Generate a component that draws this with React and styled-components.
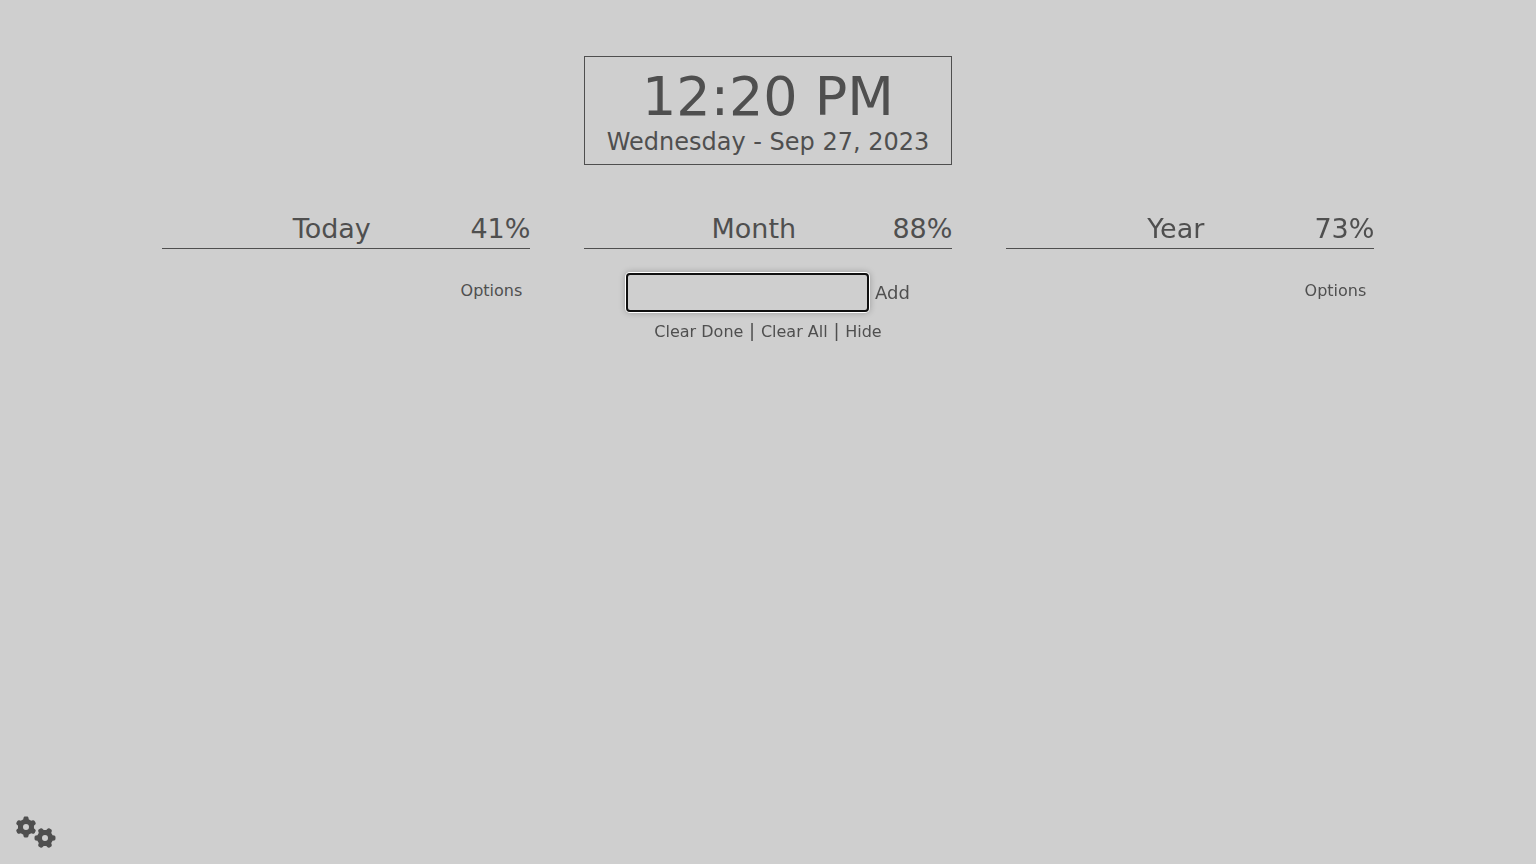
import React from "react";
import styled, { createGlobalStyle } from "styled-components";
import { FaGears } from "react-icons/fa6";

const GlobalStyle = createGlobalStyle`
  html { height: 100%; background: #cfcfcf; }
  body { margin: 0; height: 100%; overflow: hidden; }
  #root { height: 100%; }
  * { box-sizing: border-box; }
`;

const Page = styled.div`
  height: 100%;
  display: flex;
  flex-direction: column;
  align-items: center;
  padding-top: 56px;
  background: #cfcfcf;
  color: #4f4f4f;
  font-family: "DejaVu Sans", sans-serif;
`;

const Clock = styled.header`
  width: 368px;
  height: 109px;
  border: 1px solid #4f4f4f;
  text-align: center;
  padding-top: 9px;
`;

const Time = styled.div`
  font-size: 54px;
  line-height: 62px;
  white-space: nowrap;
`;

const DateLine = styled.div`
  font-size: 24px;
  line-height: 28px;
  white-space: nowrap;
`;

const Columns = styled.main`
  display: grid;
  grid-template-columns: repeat(3, 368px);
  column-gap: 54px;
  margin-top: 47px;
`;

const Column = styled.section`
  display: flex;
  flex-direction: column;
`;

const Heading = styled.div`
  display: flex;
  height: 37px;
  border-bottom: 1px solid #4f4f4f;
  font-size: 27px;
  line-height: 33px;
`;

const Title = styled.div`
  flex: 1;
  text-align: center;
  padding-left: 31.2px;
`;

const Percent = styled.div`
  margin-right: -0.4px;
  text-align: right;
`;

const Options = styled.div`
  align-self: flex-end;
  margin: 32px 7.7px 0 0;
  font-size: 16px;
  line-height: 20px;
`;

const Form = styled.form`
  display: flex;
  align-items: center;
  margin: 24px 0 0 42px;
`;

const Field = styled.input`
  width: 243px;
  height: 39px;
  padding: 0 8px;
  border: 2px solid #101010;
  border-radius: 4px;
  background: transparent;
  color: inherit;
  font: inherit;
  caret-color: transparent;
  outline: none;
  box-shadow: 0 0 0 1px #fff, 0 0 6px 1px rgba(0, 0, 0, 0.25);
`;

const AddButton = styled.span`
  margin-left: 6px;
  font-size: 18px;
  line-height: 22px;
`;

const Links = styled.div`
  display: flex;
  justify-content: center;
  margin-top: 8px;
  font-size: 16px;
  line-height: 22px;
`;

const LinkText = styled.span`
  padding-top: 1px;
`;

const Divider = styled.span`
  margin: 0 5.72px;
  font-size: 18px;
`;

const Settings = styled.div`
  margin-top: auto;
  align-self: flex-start;
  padding: 0 0 16px 16px;
  line-height: 0;

  svg {
    width: 40px;
    height: 32px;
  }
`;

const periods = [
  { name: "Today", percent: "41%" },
  { name: "Month", percent: "88%", tasks: true },
  { name: "Year", percent: "73%" },
];

function Tasks() {
  return (
    <>
      <Form>
        <Field autoFocus />
        <AddButton>Add</AddButton>
      </Form>
      <Links>
        <LinkText>Clear Done</LinkText>
        <Divider>|</Divider>
        <LinkText>Clear All</LinkText>
        <Divider>|</Divider>
        <LinkText>Hide</LinkText>
      </Links>
    </>
  );
}

export default function App() {
  return (
    <>
      <GlobalStyle />
      <Page>
        <Clock>
          <Time>12:20 PM</Time>
          <DateLine>Wednesday - Sep 27, 2023</DateLine>
        </Clock>
        <Columns>
          {periods.map((p) => (
            <Column key={p.name}>
              <Heading>
                <Title>{p.name}</Title>
                <Percent>{p.percent}</Percent>
              </Heading>
              {p.tasks ? <Tasks /> : <Options>Options</Options>}
            </Column>
          ))}
        </Columns>
        <Settings>
          <FaGears />
        </Settings>
      </Page>
    </>
  );
}
